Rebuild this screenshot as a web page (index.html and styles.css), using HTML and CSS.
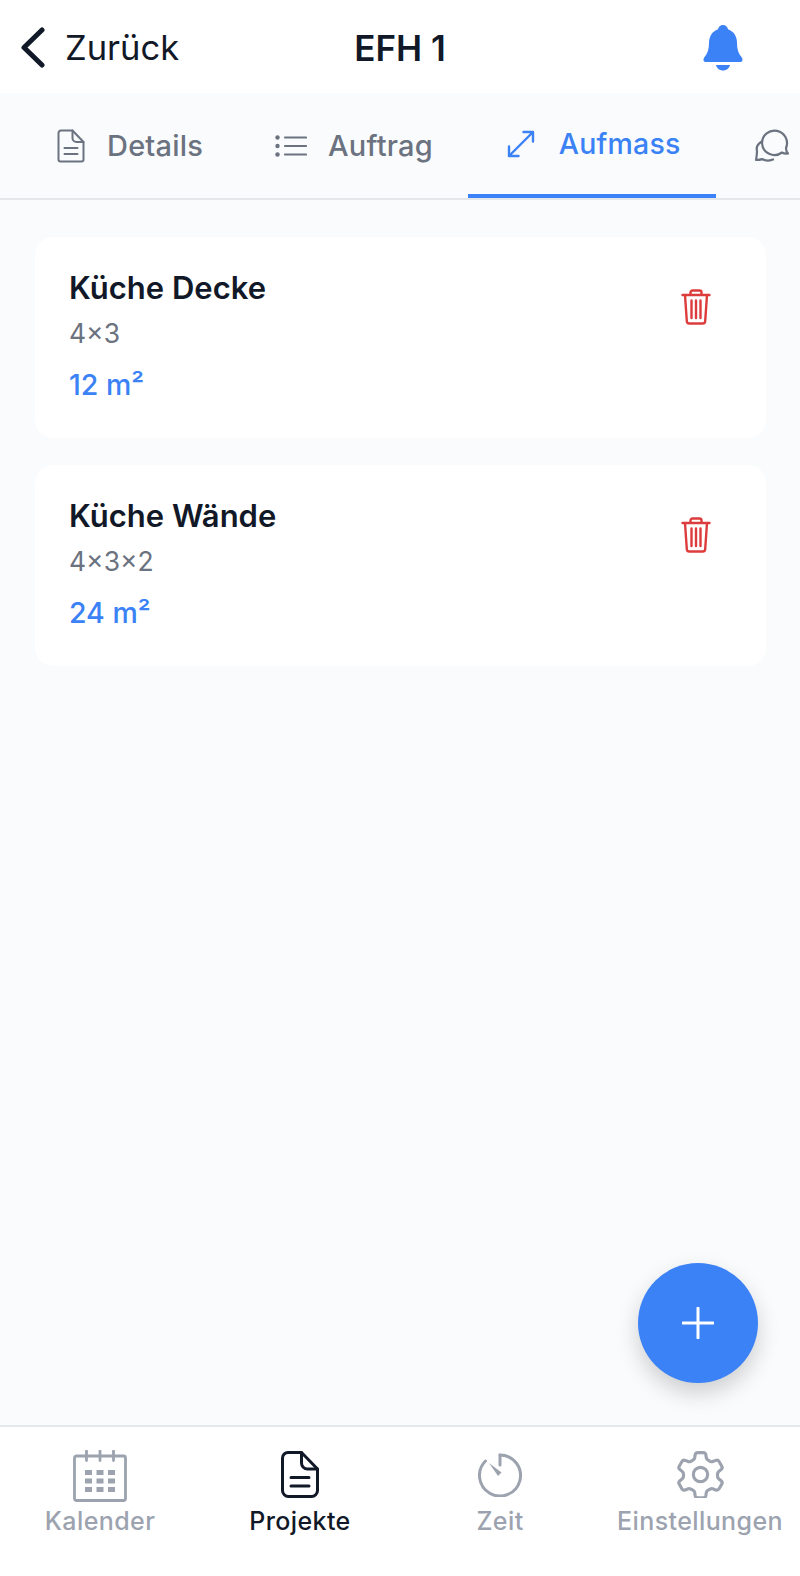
FILE: index.html
```html
<!DOCTYPE html>
<html lang="de">
<head>
    <meta charset="UTF-8">
    <meta name="viewport" content="width=device-width, initial-scale=1.0">
    <title>EFH 1</title>
    <link rel="stylesheet" href="styles.css">
</head>
<body>
    <header class="topbar">
        <div class="back">
            <svg class="back-icon" viewBox="0 0 25 41" fill="none" stroke="currentColor" stroke-width="5" stroke-linecap="round" stroke-linejoin="round"><path d="M22 3 L4 20.5 L22 38"/></svg>
            <span>Zurück</span>
        </div>
        <h1 class="title">EFH 1</h1>
        <svg class="bell" viewBox="0 0 40 46" fill="#3b82f6"><path d="M20 0c2.600 0 4.500 1.900 5 4.300C31 6.500 34 11.600 34 18c0 6 1.300 10.500 4.600 14.200 1.400 1.600 1.400 4.800-1.600 4.800H3c-3 0-3-3.200-1.600-4.800C4.700 28.500 6 24 6 18 6 11.600 9 6.500 15 4.300 15.500 1.900 17.400 0 20 0z"/><path d="M13 40h14c-.8 3.400-3.600 5.500-7 5.500s-6.200-2.100-7-5.500z"/></svg>
    </header>

    <nav class="tabs">
        <div class="tab">
            <svg class="tab-icon" viewBox="0 0 28 34" fill="none" stroke="currentColor" stroke-width="2" stroke-linecap="round" stroke-linejoin="round"><path d="M4 1.500h11.500L26.500 13v17.500a2 2 0 0 1-2 2H3.500a2 2 0 0 1-2-2V4a2.500 2.500 0 0 1 2.500-2.500z"/><path d="M15.500 1.500V9a4 4 0 0 0 4 4h7"/><path d="M7.500 19h13M7.500 25h13"/></svg>
            <span>Details</span>
        </div>
        <div class="tab tab-list">
            <svg class="tab-icon list-icon" viewBox="0 0 32 22" fill="none" stroke="currentColor" stroke-width="2.200" stroke-linecap="round"><path d="M10 2.500h21M10 11h21M10 19.500h21"/><g fill="currentColor" stroke="none"><circle cx="2.500" cy="2.500" r="2.200"/><circle cx="2.500" cy="11" r="2.200"/><circle cx="2.500" cy="19.500" r="2.200"/></g></svg>
            <span>Auftrag</span>
        </div>
        <div class="tab tab-active">
            <svg class="tab-icon" viewBox="0 0 28 28" fill="none" stroke="currentColor" stroke-width="2.400" stroke-linecap="round" stroke-linejoin="round"><path d="M2 26 L26 2M16.500 2H26V11.500M2 16.500V26H11.500"/></svg>
            <span>Aufmass</span>
        </div>
        <div class="tab">
            <svg class="tab-icon chat-icon" viewBox="0 0 34 34" fill="none" stroke="currentColor" stroke-width="2.200" stroke-linecap="round" stroke-linejoin="round"><path d="M7 14a12.500 12.500 0 1 1 24 5c0 2 .5 4 2 5.500-2.500.3-4.500 0-6-1A12.500 12.500 0 0 1 7 14z"/><path d="M6 13c-3 2-5 5-4 9 0 3-.2 5-1 9 2.500 0 4.500 0 6-1 3 2 7 2 11 .5"/></svg>
        </div>
    </nav>

    <main class="content">
        <section class="card">
            <div>
                <h2 class="card-title">Küche Decke</h2>
                <p class="card-size">4×3</p>
                <p class="card-area">12 m²</p>
            </div>
            <svg class="trash" viewBox="0 0 30 36" fill="none" stroke="currentColor" stroke-width="2.400" stroke-linecap="round" stroke-linejoin="round"><path d="M1.500 6h27M9.500 6V3.500a2 2 0 0 1 2-2h7a2 2 0 0 1 2 2V6M4 6l1.800 26a2.500 2.500 0 0 0 2.500 2.500h13.400a2.500 2.500 0 0 0 2.500-2.500L26 6M10.500 11.500v17.500M15 11.500v17.500M19.500 11.500v17.500"/></svg>
        </section>
        <section class="card">
            <div>
                <h2 class="card-title">Küche Wände</h2>
                <p class="card-size">4×3×2</p>
                <p class="card-area">24 m²</p>
            </div>
            <svg class="trash" viewBox="0 0 30 36" fill="none" stroke="currentColor" stroke-width="2.400" stroke-linecap="round" stroke-linejoin="round"><path d="M1.500 6h27M9.500 6V3.500a2 2 0 0 1 2-2h7a2 2 0 0 1 2 2V6M4 6l1.800 26a2.500 2.500 0 0 0 2.500 2.500h13.400a2.500 2.500 0 0 0 2.500-2.500L26 6M10.500 11.500v17.500M15 11.500v17.500M19.500 11.500v17.500"/></svg>
        </section>
    </main>

    <button class="fab" aria-label="Neu">
        <svg viewBox="0 0 32 32" fill="none" stroke="#fff" stroke-width="3" stroke-linecap="round"><path d="M16 1v30M1 16h30"/></svg>
    </button>

    <footer class="bottomnav">
        <div class="navitem">
            <svg class="cal-icon" viewBox="0 0 54 52" fill="none" stroke="currentColor" stroke-width="2.800" stroke-linejoin="round"><rect x="1.500" y="6" width="51" height="44.500" rx="2"/><path d="M13.500 1v9.500M27 1v9.500M40.500 1v9.500" stroke-linecap="round"/><g fill="currentColor" stroke="none"><rect x="12" y="20" width="7" height="5"/><rect x="23.500" y="20" width="7" height="5"/><rect x="35" y="20" width="7" height="5"/><rect x="12" y="28.500" width="7" height="5"/><rect x="23.500" y="28.500" width="7" height="5"/><rect x="35" y="28.500" width="7" height="5"/><rect x="12" y="37" width="7" height="5"/><rect x="23.500" y="37" width="7" height="5"/><rect x="35" y="37" width="7" height="5"/></g></svg>
            <span>Kalender</span>
        </div>
        <div class="navitem navitem-active">
            <svg class="doc-icon" viewBox="0 0 38 47" fill="none" stroke="currentColor" stroke-width="3" stroke-linecap="round" stroke-linejoin="round"><path d="M7 1.500h13.500L36.500 18v21.500a6 6 0 0 1-6 6H7.500a6 6 0 0 1-6-6V7a5.500 5.500 0 0 1 5.500-5.500z"/><path d="M20.500 1.500V12a6 6 0 0 0 6 6h10"/><path d="M10 26.500h18M10 35h18"/></svg>
            <span>Projekte</span>
        </div>
        <div class="navitem">
            <svg class="zeit-icon" viewBox="0 0 44 44" fill="none" stroke="currentColor" stroke-width="3" stroke-linecap="round"><path d="M22 2a20.500 20.500 0 1 1-14.500 6"/><path d="M22 2v10"/><path d="M11 10l12.500 9.500-3.500 3.500z" fill="currentColor" stroke="none"/></svg>
            <span>Zeit</span>
        </div>
        <div class="navitem">
            <svg class="gear-icon" viewBox="1.500 1.500 21 21" fill="none" stroke="currentColor" stroke-width="1.400" stroke-linecap="round" stroke-linejoin="round"><path d="M9.600 3.200c.1-.6.600-1 1.200-1h2.400c.6 0 1.100.4 1.200 1l.2 1.400c.1.400.4.800.8 1l.9.500c.4.200.8.300 1.200.100l1.300-.5c.6-.2 1.200 0 1.500.5l1.200 2.100c.3.500.2 1.100-.3 1.500l-1.100.9c-.3.300-.5.700-.5 1.100v1c0 .4.200.8.500 1.100l1.100.9c.5.400.6 1 .3 1.500l-1.200 2.100c-.3.500-.9.700-1.500.5l-1.300-.5c-.4-.2-.8-.1-1.200.1l-.9.500c-.4.200-.7.600-.8 1l-.2 1.400c-.1.600-.6 1-1.200 1h-2.400c-.6 0-1.100-.4-1.200-1l-.2-1.400c-.1-.4-.4-.8-.8-1l-.9-.5c-.4-.2-.8-.3-1.200-.1l-1.300.5c-.6.200-1.200 0-1.500-.5l-1.200-2.100c-.3-.5-.2-1.100.3-1.500l1.100-.9c.3-.3.500-.7.500-1.100v-1c0-.4-.2-.8-.5-1.100l-1.100-.9c-.5-.4-.6-1-.3-1.500l1.200-2.100c.3-.5.900-.7 1.500-.5l1.300.5c.4.200.8.100 1.200-.1l.9-.5c.4-.2.700-.6.800-1z"/><circle cx="12" cy="12" r="3.200"/></svg>
            <span>Einstellungen</span>
        </div>
    </footer>
</body>
</html>
```

FILE: styles.css
```css
* {
    box-sizing: border-box;
}

body {
    margin: 0;
    height: 1576px;
    position: relative;
    display: flex;
    flex-direction: column;
    background-color: #fafbfc;
    font-family: Inter, "Liberation Sans", sans-serif;
    color: #111827;
    overflow: hidden;
}

/* barra do topo */
.topbar {
    height: 93px;
    flex: none;
    background-color: #fff;
    position: relative;
    display: flex;
    align-items: center;
    justify-content: space-between;
    padding: 2px 57px 0 20px;
}

.back {
    display: flex;
    align-items: center;
    gap: 20px;
    font-size: 34.500px;
}

.back-icon {
    width: 25px;
    height: 41px;
}

.title {
    position: absolute;
    left: 0;
    right: 0;
    margin: 0;
    text-align: center;
    font-size: 35px;
    font-weight: 600;
    pointer-events: none;
}

.bell {
    width: 40px;
    height: 46px;
}

/* abas */
.tabs {
    height: 107px;
    flex: none;
    display: flex;
    padding-left: 18px;
    border-bottom: 2px solid #e5e7eb;
    overflow: hidden;
    color: #6b7280;
    font-size: 29px;
    font-weight: 500;
    letter-spacing: 0.2px;
}

.tab {
    flex: none;
    display: flex;
    align-items: center;
    gap: 22px;
    padding: 0 33px 0 39px;
}

.tab-list {
    gap: 21px;
    padding-right: 35px;
}

.tab-active {
    color: #3b82f6;
    border-bottom: 4px solid #3b82f6;
    gap: 24px;
    padding-right: 35px;
    font-size: 28.500px;
}

.tab-icon {
    width: 28px;
    height: 34px;
}

.list-icon {
    width: 32px;
    height: 22px;
}

.chat-icon {
    width: 34px;
    height: 34px;
}

/* cards */
.content {
    flex: 1;
    padding: 37px 34px 0 35px;
    display: flex;
    flex-direction: column;
    gap: 27px;
}

.card {
    height: 201px;
    background-color: #fff;
    border-radius: 18px;
    padding: 33px 55px 0 34px;
    display: flex;
    justify-content: space-between;
    align-items: flex-start;
}

.card-title {
    margin: 0;
    font-size: 31px;
    font-weight: 600;
    line-height: 36px;
}

.card-size {
    margin: 11px 0 0;
    font-size: 26.500px;
    line-height: 32px;
    color: #6b7280;
}

.card-area {
    margin: 18px 0 0;
    font-size: 28.500px;
    font-weight: 500;
    line-height: 36px;
    color: #3b82f6;
}

.trash {
    width: 30px;
    height: 36px;
    margin-top: 19px;
    color: #dc3c3c;
}

/* botao flutuante */
.fab {
    position: absolute;
    left: 638px;
    top: 1263px;
    width: 120px;
    height: 120px;
    border: 0;
    border-radius: 50%;
    background-color: #3b82f6;
    box-shadow: 0 10px 22px rgba(0, 0, 0, 0.18);
    display: flex;
    align-items: center;
    justify-content: center;
    padding: 0;
}

.fab svg {
    width: 32px;
    height: 32px;
}

/* navegacao de baixo */
.bottomnav {
    height: 151px;
    flex: none;
    background-color: #fff;
    border-top: 2px solid #e5e7eb;
    display: grid;
    grid-template-columns: repeat(4, 200px);
    align-items: start;
    padding-top: 23px;
    color: #9ca3af;
    font-size: 25px;
    font-weight: 500;
    letter-spacing: 0.4px;
}

.navitem {
    display: grid;
    grid-template-rows: 52px 30px;
    row-gap: 4px;
    justify-items: center;
    align-items: center;
}

.navitem span {
    line-height: 30px;
    white-space: nowrap;
}

.navitem-active {
    color: #111827;
}

.cal-icon {
    width: 54px;
    height: 52px;
}

.doc-icon {
    width: 38px;
    height: 47px;
    margin-bottom: 4px;
}

.zeit-icon {
    width: 44px;
    height: 44px;
    margin-bottom: 2px;
}

.gear-icon {
    width: 47px;
    height: 47px;
    margin-bottom: 4px;
}
```
